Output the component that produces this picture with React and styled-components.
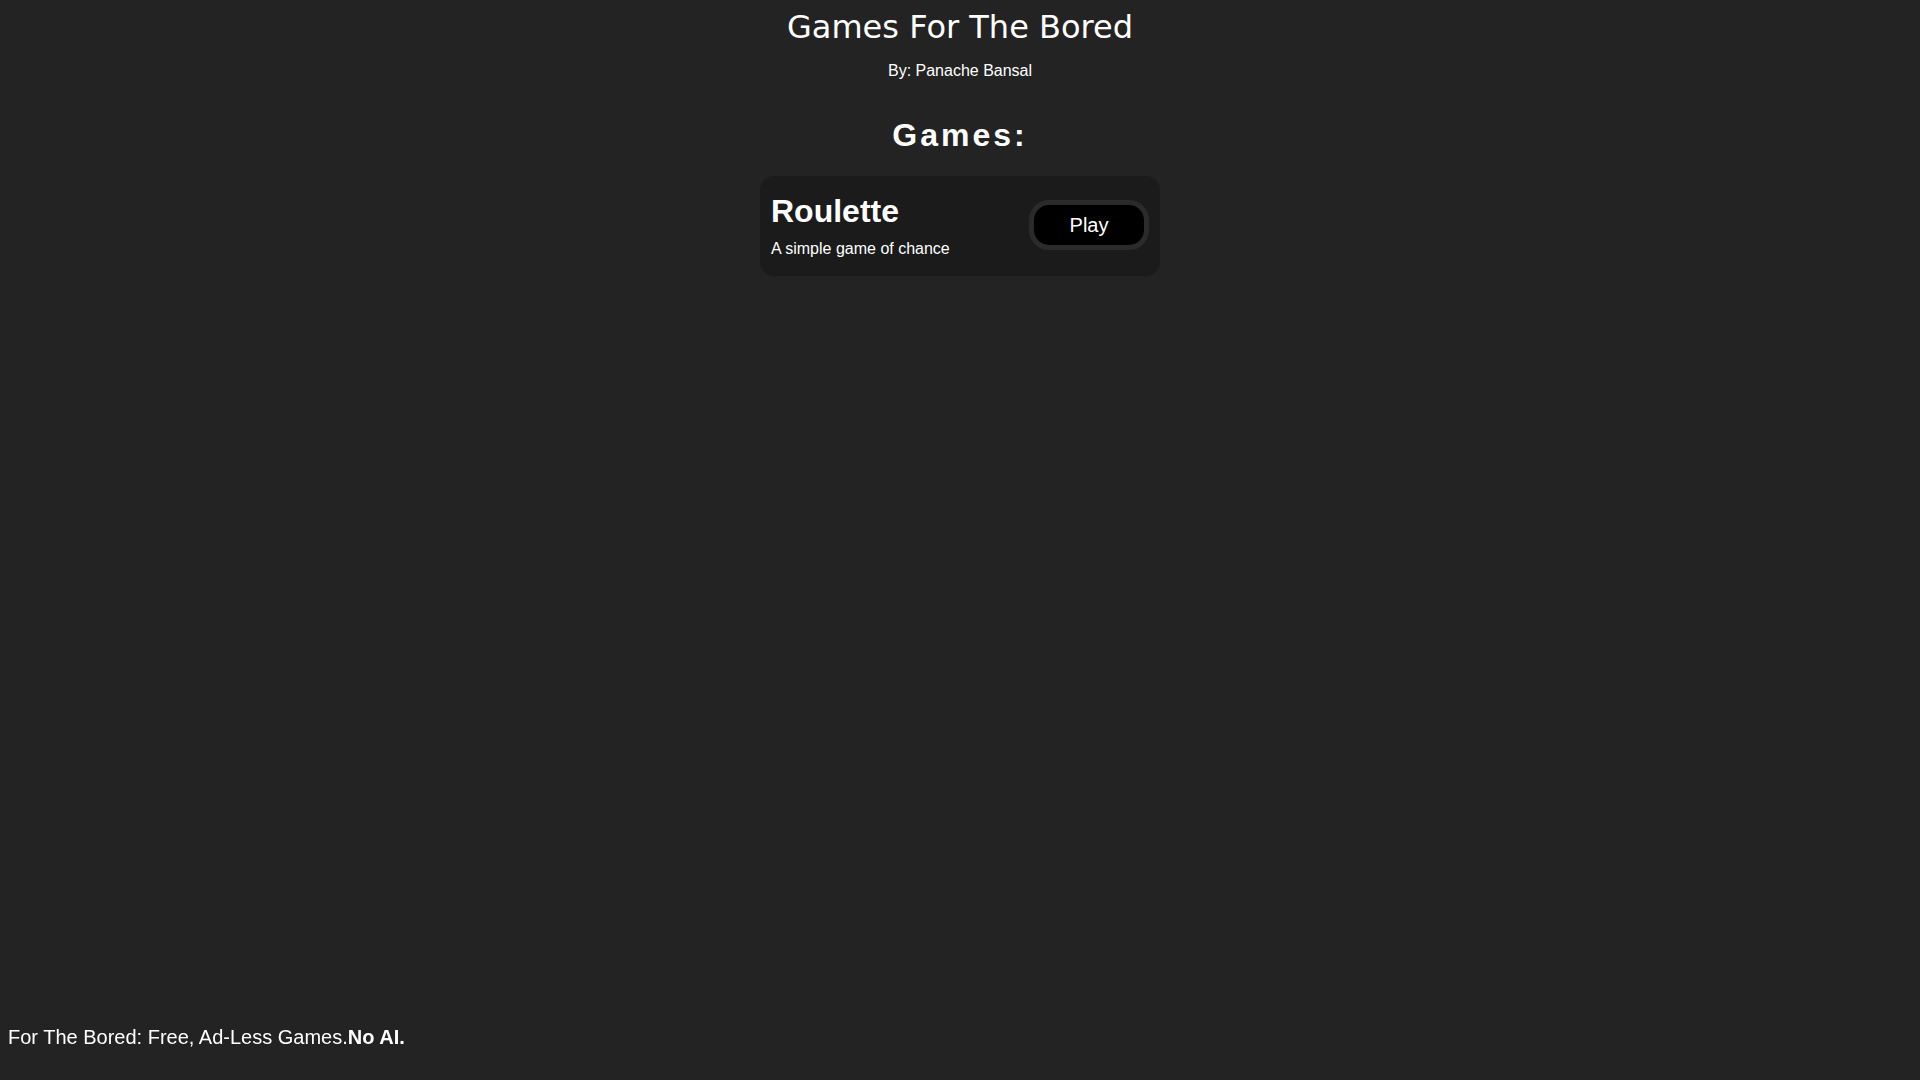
import React from "react";
import styled, { createGlobalStyle } from "styled-components";

const Global = createGlobalStyle`
  html, body {
    margin: 0;
    padding: 0;
    background: #232323;
    color: #ffffff;
    font-family: "Liberation Sans", Arial, sans-serif;
  }
`;

const Page = styled.div`
  min-height: 100vh;
  display: flex;
  flex-direction: column;
  align-items: center;
`;

const Title = styled.h1`
  font-family: "DejaVu Sans", sans-serif;
  font-weight: normal;
  font-size: 32px;
  margin: 8px 0 0;
`;

const Byline = styled.p`
  font-size: 16px;
  margin: 16px 0 0;
`;

const Heading = styled.h2`
  font-size: 32px;
  font-weight: bold;
  letter-spacing: 3px;
  margin: 37px 0 0;
`;

const List = styled.div`
  display: flex;
  flex-direction: column;
  gap: 16px;
  margin-top: 22px;
`;

const Card = styled.div`
  width: 400px;
  height: 100px;
  box-sizing: border-box;
  padding: 0 11px 2px;
  background: #1b1b1b;
  border-radius: 14px;
  display: flex;
  align-items: center;
  justify-content: space-between;
`;

const Info = styled.div`
  display: flex;
  flex-direction: column;
`;

const Name = styled.h3`
  font-size: 32px;
  font-weight: bold;
  margin: 0 0 10px;
`;

const Desc = styled.span`
  font-size: 16px;
`;

const PlayButton = styled.button`
  width: 120px;
  height: 50px;
  box-sizing: border-box;
  border: 5px solid #2b2b2b;
  border-radius: 20px;
  background: #000000;
  color: #ffffff;
  font-family: "Liberation Sans", Arial, sans-serif;
  font-size: 20px;
  cursor: pointer;
`;

const Footer = styled.footer`
  position: fixed;
  left: 8px;
  bottom: 31px;
  font-size: 20px;
`;

const games = [{ name: "Roulette", desc: "A simple game of chance" }];

export default function App() {
  return (
    <>
      <Global />
      <Page>
        <Title>Games For The Bored</Title>
        <Byline>By: Panache Bansal</Byline>
        <Heading>Games:</Heading>
        <List>
          {games.map((g) => (
            <Card key={g.name}>
              <Info>
                <Name>{g.name}</Name>
                <Desc>{g.desc}</Desc>
              </Info>
              <PlayButton>Play</PlayButton>
            </Card>
          ))}
        </List>
      </Page>
      <Footer>
        For The Bored: Free, Ad-Less Games.<b>No AI.</b>
      </Footer>
    </>
  );
}
